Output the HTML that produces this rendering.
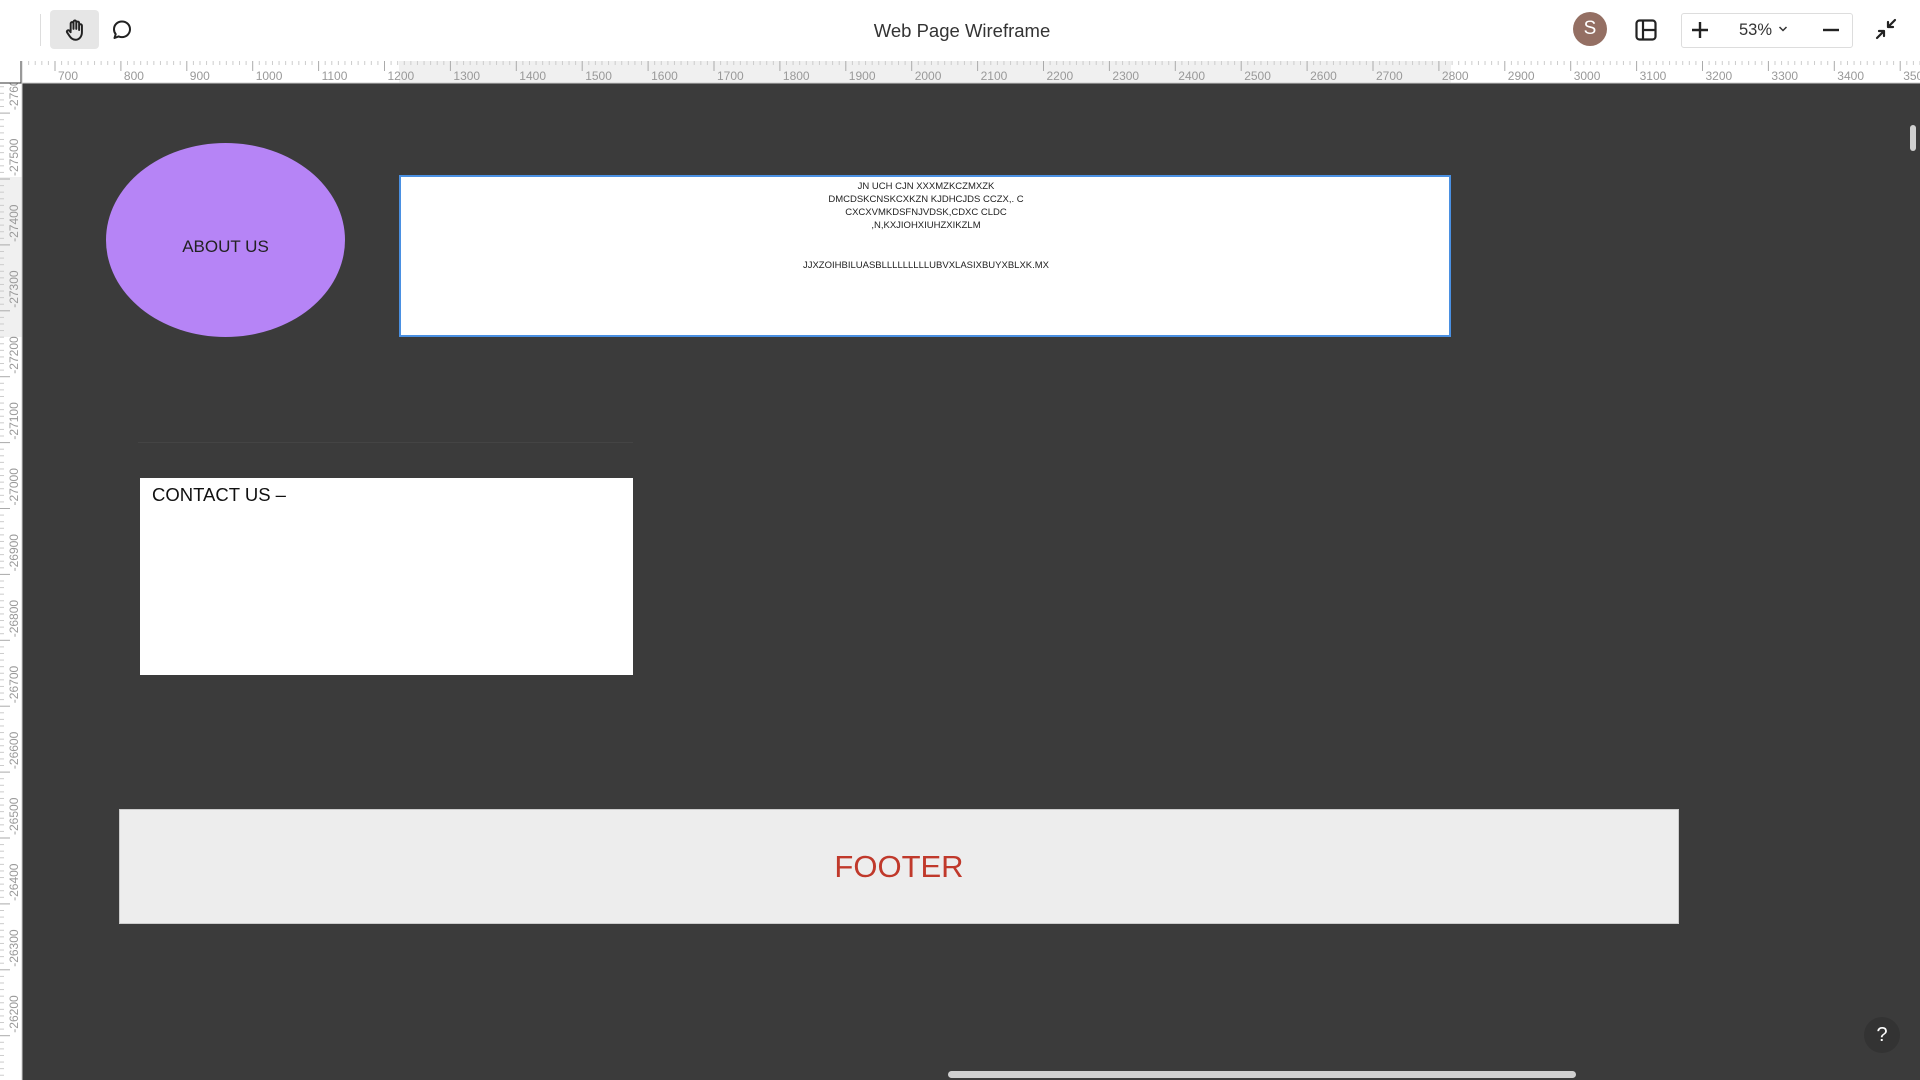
<!DOCTYPE html>
<html><head><meta charset="utf-8"><style>
*{margin:0;padding:0;box-sizing:border-box}
body{width:1920px;height:1080px;overflow:hidden;background:#3b3b3b;font-family:"Liberation Sans",sans-serif;position:relative}
.abs{position:absolute}
#top{left:0;top:0;width:1920px;height:61px;background:#fff}
</style></head><body>
<div id="top" class="abs">
 <div class="abs" style="left:40px;top:14px;width:1px;height:32px;background:#ddd"></div>
 <div class="abs" style="left:50px;top:10px;width:49px;height:39px;background:#e6e6e6;border-radius:4px"></div>
 <svg class="abs" style="left:62px;top:17px" width="26" height="26" viewBox="0 0 24 24" fill="none" stroke="#222" stroke-width="1.8" stroke-linecap="round" stroke-linejoin="round"><path d="M8 13V6a1.3 1.3 0 0 1 2.6 0v5M10.6 11V4.5a1.3 1.3 0 0 1 2.6 0V11M13.2 11V5.5a1.3 1.3 0 0 1 2.6 0V12M15.8 12V8a1.3 1.3 0 0 1 2.6 0v6c0 4-2.5 7-6 7-2.8 0-4.2-1.5-5.5-3.5L4.6 14a1.3 1.3 0 0 1 2-1.5L8 14"/></svg>
 <svg class="abs" style="left:110px;top:18px" width="24" height="24" viewBox="0 0 24 24" fill="none" stroke="#222" stroke-width="2" stroke-linejoin="round"><path d="M12 3.5c4.6 0 8 3.4 8 7.8s-3.6 7.8-8 7.8c-1.2 0-2.4-.3-3.4-.7L4.5 20l1.2-3.8C4.6 14.9 4 13.2 4 11.3 4 6.9 7.4 3.5 12 3.5z"/></svg>
 <div class="abs" style="left:762px;top:20px;width:400px;text-align:center;font-size:18.5px;color:#333">Web Page Wireframe</div>
 <div class="abs" style="left:1573px;top:12px;width:34px;height:34px;border-radius:50%;background:#946f63;color:#fff;font-size:19px;text-align:center;line-height:34px">S</div>
 <svg class="abs" style="left:1634px;top:18px" width="24" height="24" viewBox="0 0 24 24" fill="none" stroke="#222" stroke-width="2.2"><rect x="2.5" y="2.5" width="19" height="19" rx="3"/><path d="M9 2.5v19M9 12h12.5"/></svg>
 <div class="abs" style="left:1681px;top:13px;width:172px;height:35px;border:1px solid #ddd;border-radius:3px"></div>
 <svg class="abs" style="left:1690px;top:20px" width="20" height="20" viewBox="0 0 20 20" stroke="#222" stroke-width="2.4"><path d="M10 2v16M2 10h16"/></svg>
 <div class="abs" style="left:1739px;top:21px;font-size:16.5px;color:#333">53%</div>
 <svg class="abs" style="left:1778px;top:25px" width="10" height="8" viewBox="0 0 10 8" fill="none" stroke="#333" stroke-width="1.5"><path d="M1.5 2l3.5 3.5L8.5 2"/></svg>
 <svg class="abs" style="left:1821px;top:20px" width="20" height="20" viewBox="0 0 20 20" stroke="#222" stroke-width="2.4"><path d="M2 10h16"/></svg>
 <svg class="abs" style="left:1875px;top:18px" width="22" height="22" viewBox="0 0 22 22" fill="none" stroke="#222" stroke-width="2.2" stroke-linecap="round"><path d="M13 9L20 2M13 9h5M13 9V4M9 13L2 20M9 13H4M9 13v5"/></svg>
</div>
<svg id="ruler" class="abs" style="left:0;top:61px" width="1920" height="1019"></svg>
<div class="abs" style="left:106px;top:143px;width:239px;height:194px;border-radius:50%;background:#b684f6"></div>
<div class="abs" style="left:106px;top:237px;width:239px;text-align:center;font-size:17px;color:#222">ABOUT US</div>
<div class="abs" style="left:399px;top:175px;width:1052px;height:162px;background:#fff;border:2px solid #4a90e2"></div>
<div class="abs" style="left:726px;top:180px;width:400px;text-align:center;font-size:9.5px;line-height:13px;color:#222">JN UCH CJN XXXMZKCZMXZK<br>DMCDSKCNSKCXKZN KJDHCJDS CCZX,. C<br>CXCXVMKDSFNJVDSK,CDXC CLDC<br>,N,KXJIOHXIUHZXIKZLM</div>
<div class="abs" style="left:626px;top:260px;width:600px;text-align:center;font-size:9.5px;color:#222">JJXZOIHBILUASBLLLLLLLLLUBVXLASIXBUYXBLXK.MX</div>
<div class="abs" style="left:138px;top:442px;width:495px;height:1px;background:#444"></div>
<div class="abs" style="left:140px;top:478px;width:493px;height:197px;background:#fff"></div>
<div class="abs" style="left:152px;top:484px;font-size:18.5px;color:#111">CONTACT US –</div>
<div class="abs" style="left:119px;top:809px;width:1560px;height:115px;background:#ededed;border:1px solid #ccc"></div>
<div class="abs" style="left:119px;top:849px;width:1560px;text-align:center;font-size:31px;color:#c0392b">FOOTER</div>
<div class="abs" style="left:948px;top:1071px;width:628px;height:7px;border-radius:4px;background:#d0d0d0"></div>
<div class="abs" style="left:1910px;top:125px;width:6px;height:26px;border-radius:3px;background:#d0d0d0"></div>
<div class="abs" style="left:1864px;top:1017px;width:36px;height:36px;border-radius:50%;background:#333;color:#fff;text-align:center;line-height:36px;font-size:20px">?</div>
<script>
var s='<rect x="0" y="0" width="1920" height="22" fill="#fff"/><rect x="399" y="0" width="1052" height="22" fill="#f0f0f0"/><rect x="0" y="0" width="22" height="1019" fill="#fff"/><rect x="0" y="116" width="22" height="160" fill="#f0f0f0"/><line x1="0" y1="22" x2="1920" y2="22" stroke="#ccc"/><line x1="22" y1="0" x2="22" y2="1019" stroke="#ccc"/>';
for(var v=600;v<=3600;v+=10){var x=55+(v-700)*0.659;if(x<23||x>1920)continue;var M=v%100==0;s+='<line x1="'+x+'" y1="0" x2="'+x+'" y2="'+(M?10:4)+'" stroke="'+(M?'#aaa':'#ccc')+'"/>';if(M)s+='<text x="'+(x+3)+'" y="19" font-size="12" fill="#999" font-family="Liberation Sans">'+v+'</text>';}
for(var v=-27700;v<=-26100;v+=10){var y=118+(v+27500)*0.659;if(y<23||y>1019)continue;var M=v%100==0;s+='<line x1="0" y1="'+y+'" x2="'+(M?10:4)+'" y2="'+y+'" stroke="'+(M?'#aaa':'#ccc')+'"/>';if(M)s+='<text transform="translate(18,'+(y-3)+') rotate(-90)" font-size="12" fill="#999" font-family="Liberation Sans">'+v+'</text>';}
s+='<rect x="0" y="0" width="22" height="22" fill="#fff"/><path d="M21 0V22H0" fill="none" stroke="#333"/>';
document.getElementById('ruler').innerHTML=s;
</script>
</body></html>
